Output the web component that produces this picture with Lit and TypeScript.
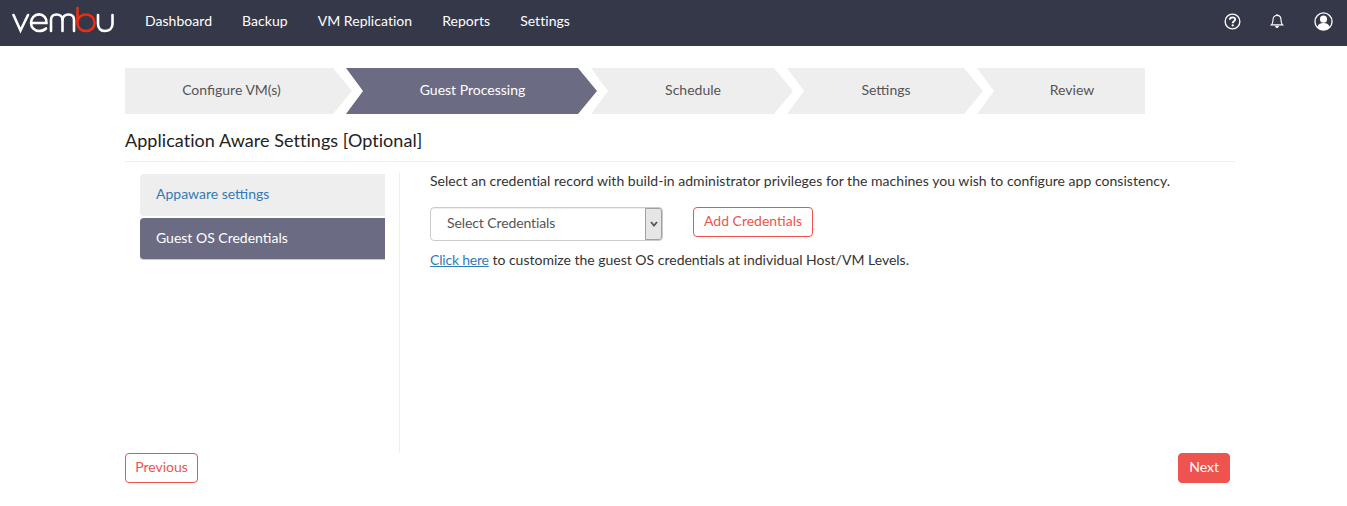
import { LitElement, html, css, svg } from "lit";
import { customElement } from "lit/decorators.js";

const STEPS = [
  { label: "Configure VM(s)", width: 227, first: true },
  { label: "Guest Processing", width: 251, active: true },
  { label: "Schedule", width: 202 },
  { label: "Settings", width: 196 },
  { label: "Review", width: 168, last: true },
];

const logo = svg`<svg class="logo" width="104" height="30" viewBox="0 0 104 30" fill="none" stroke-linecap="round" stroke-width="2.6">
  <g stroke="#fff">
    <path d="M1.5 9 L8.5 24.5 L16 9"/>
    <path d="M19.5 17 H34.5 C35 12 31.5 8.4 27 8.4 C22.500 8.400 19 12 19 17 C19 21.500 22.500 25 27 25 C30 25 32.500 24 34 22.500"/>
    <path d="M39 25 V14 C39 10.500 41 8.500 44.500 8.500 C48 8.500 50.500 10.500 50.500 14 V25"/>
    <path d="M50.500 14 C50.500 10.500 53 8.500 56.500 8.500 C60 8.500 62 10.500 62 14 V25"/>
    <path d="M86 9 V18 C86 22.500 89 25 93 25 C97 25 100.500 22.500 100.500 18 V9"/>
  </g>
  <path stroke="#ec2d14" d="M65.500 2 V17 C65.500 21.500 69 25 74 25 C79 25 82.500 21.500 82.500 17 C82.500 12 79 8.500 74 8.500 C69.500 8.500 65.500 11.500 65.500 16"/>
</svg>`;

@customElement("app-root")
export class AppRoot extends LitElement {
  static styles = css`
    :host {
      display: block;
      height: 506px;
      background: #fff;
      font-family: Lato, "Liberation Sans", sans-serif;
      font-size: 14px;
      color: #333;
      overflow: hidden;
    }
    .nav {
      height: 46px;
      background: #353849;
      display: flex;
      align-items: center;
      padding-left: 12px;
      box-sizing: border-box;
    }
    .logo { display: block; margin-top: -4px; }
    .menu {
      display: flex;
      gap: 30px;
      margin-left: 29px;
      margin-bottom: 6px;
    }
    .menu span { color: #fff; font-size: 14px; letter-spacing: 0.04px; }
    .tools {
      margin-left: auto;
      margin-bottom: 4px;
      display: flex;
      align-items: center;
      padding-right: 14px;
      gap: 29px;
    }
    .tools svg { display: block; }
    .tools .bell { margin-right: 1px; }
    .main { padding: 22px 112px 0 125px; }
    .steps { display: flex; height: 46px; }
    .step {
      flex: none;
      height: 46px;
      box-sizing: border-box;
      background: #eee;
      color: #555;
      display: flex;
      align-items: center;
      justify-content: center;
      margin-left: -6px;
      padding: 0 0 4px 2px;
      clip-path: polygon(0 0, calc(100% - 19px) 0, 100% 50%, calc(100% - 19px) 100%, 0 100%, 17px 50%);
    }
    .step.first {
      margin-left: 0;
      padding: 0 14px 4px 0;
      clip-path: polygon(0 0, calc(100% - 19px) 0, 100% 50%, calc(100% - 19px) 100%, 0 100%);
    }
    .step.last {
      padding: 0 0 4px 22px;
      clip-path: polygon(0 0, 100% 0, 100% 100%, 0 100%, 17px 50%);
    }
    .step.active { background: #6b6c84; color: #fff; }
    h1 {
      margin: 0;
      font-size: 18px;
      font-weight: 400;
      line-height: 22px;
      letter-spacing: 0.05px;
      color: #222;
      padding: 15px 0 10px;
      border-bottom: 1px solid #eee;
    }
    .body { display: flex; height: 281px; padding-top: 10px; box-sizing: content-box; }
    .side {
      width: 245px;
      margin-left: 15px;
      padding-top: 2px;
      display: flex;
      flex-direction: column;
      gap: 2px;
    }
    .side div {
      height: 42px;
      box-sizing: border-box;
      display: flex;
      align-items: center;
      padding-left: 16px;
      border-radius: 4px 0 0 4px;
    }
    .side .off { background: #eee; color: #337ab7; padding-bottom: 4px; }
    .side .on { background: #6b6c84; color: #fff; border-bottom: 1px solid #c9c9d2; padding-bottom: 2px; }
    .content {
      margin-left: 14px;
      border-left: 1px solid #eee;
      padding-left: 30px;
      flex: 1;
    }
    .content p { margin: 0; line-height: 20px; color: #333; }
    .content p.lead { margin-top: -1px; letter-spacing: 0.033px; }
    .row { display: flex; align-items: flex-start; gap: 30px; margin-top: 16px; }
    .selwrap { position: relative; width: 233px; height: 34px; }
    select {
      appearance: none;
      width: 100%;
      height: 100%;
      box-sizing: border-box;
      border: 1px solid #ccc;
      border-radius: 4px;
      background: #fff;
      font: inherit;
      letter-spacing: -0.1px;
      color: #555;
      padding: 0 0 4px 16px;
      box-shadow: inset 0 1px 1px rgba(0, 0, 0, 0.075);
    }
    .arrow {
      position: absolute;
      right: 1px;
      top: 1px;
      bottom: 1px;
      width: 17px;
      box-sizing: border-box;
      background: #e6e6e6;
      border: 1px solid #a0a0a0;
      border-radius: 0 3px 3px 0;
      display: flex;
      align-items: center;
      justify-content: center;
    }
    .btn {
      font: inherit;
      height: 30px;
      box-sizing: border-box;
      border-radius: 4px;
      border: 1px solid #ef5350;
      background: #fff;
      color: #ef5350;
      padding: 0 10px 4px;
      cursor: pointer;
    }
    .btn.prev { width: 73px; padding: 0 0 4px; }
    .btn.solid { background: #ef5350; color: #fff; }
    .hint { margin-top: 9px !important; }
    .hint a { color: #337ab7; text-decoration: underline; letter-spacing: -0.2px; }
    .foot {
      display: flex;
      justify-content: space-between;
      padding-right: 5px;
    }
  `;

  render() {
    return html`
      <div class="nav">
        ${logo}
        <div class="menu">
          <span>Dashboard</span><span>Backup</span><span>VM Replication</span><span>Reports</span><span>Settings</span>
        </div>
        <div class="tools">
          <svg width="17" height="17" viewBox="0 0 18 18" fill="none" stroke="#fff" stroke-width="1.4">
            <circle cx="9" cy="9" r="7.8"/>
            <path d="M6.200 7.200 C6.200 5.400 7.500 4.600 9 4.600 C10.600 4.600 11.800 5.600 11.800 7 C11.800 8.700 9.200 8.900 9.200 10.800" stroke-width="2"/>
            <circle cx="9.200" cy="13.200" r="1.200" fill="#fff" stroke="none"/>
          </svg>
          <svg class="bell" width="14" height="16" viewBox="0 0 16 18" fill="none" stroke="#fff" stroke-width="1.300">
            <path d="M1.500 13.500 C3 12 3.400 10.500 3.400 8 C3.400 4.800 5.300 2.600 8 2.600 C10.700 2.600 12.600 4.800 12.600 8 C12.600 10.500 13 12 14.500 13.500 Z"/>
            <path d="M8 1 V2.600"/>
            <path d="M6.500 15 C6.700 16 7.300 16.400 8 16.400 C8.700 16.400 9.300 16 9.500 15 Z" fill="#fff"/>
          </svg>
          <svg width="19" height="19" viewBox="0 0 20 20" fill="none">
            <circle cx="10" cy="10" r="9" stroke="#fff" stroke-width="1.400"/>
            <circle cx="10" cy="7.500" r="3.700" fill="#fff"/>
            <path d="M3.500 16 C4 13 6.500 11.500 10 11.500 C13.500 11.500 16 13 16.500 16 C15 18 12.500 19 10 19 C7.500 19 5 18 3.500 16 Z" fill="#fff"/>
          </svg>
        </div>
      </div>
      <div class="main">
        <div class="steps">
          ${STEPS.map(
            (s) => html`<div
              class="step ${s.first ? "first" : ""} ${s.last ? "last" : ""} ${s.active ? "active" : ""}"
              style="width:${s.width}px"
            >${s.label}</div>`
          )}
        </div>
        <h1>Application Aware Settings [Optional]</h1>
        <div class="body">
          <div class="side">
            <div class="off">Appaware settings</div>
            <div class="on">Guest OS Credentials</div>
          </div>
          <div class="content">
            <p class="lead">Select an credential record with build-in administrator privileges for the machines you wish to configure app consistency.</p>
            <div class="row">
              <div class="selwrap">
                <select><option>Select Credentials</option></select>
                <span class="arrow">
                  <svg width="8" height="6" viewBox="0 0 8 6" fill="none" stroke="#555" stroke-width="1.800"><path d="M1 1 L4 4.500 L7 1"/></svg>
                </span>
              </div>
              <button class="btn">Add Credentials</button>
            </div>
            <p class="hint"><a href="#">Click here</a> to customize the guest OS credentials at individual Host/VM Levels.</p>
          </div>
        </div>
        <div class="foot">
          <button class="btn prev">Previous</button>
          <button class="btn solid">Next</button>
        </div>
      </div>
    `;
  }
}
